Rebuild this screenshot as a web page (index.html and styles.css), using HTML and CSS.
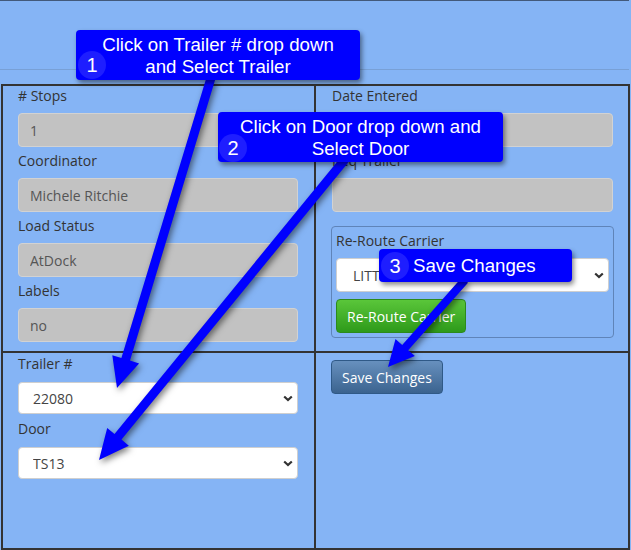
FILE: index.html
```html
<!DOCTYPE html>
<html>
<head>
<meta charset="utf-8">
<link rel="stylesheet" href="styles.css">
</head>
<body>
<div class="page">
  <div class="topbar"></div>
  <div class="grid">
    <div class="cell cell-l cell-top">
      <label class="lbl"># Stops</label>
      <input class="inp" readonly value="1">
      <label class="lbl">Coordinator</label>
      <input class="inp" readonly value="Michele Ritchie">
      <label class="lbl">Load Status</label>
      <input class="inp" readonly value="AtDock">
      <label class="lbl">Labels</label>
      <input class="inp" readonly value="no">
    </div>
    <div class="cell cell-r cell-top">
      <label class="lbl">Date Entered</label>
      <input class="inp" readonly value="">
      <label class="lbl">Req Trailer</label>
      <input class="inp" readonly value="">
      <div class="box">
        <label class="lbl">Re-Route Carrier</label>
        <select class="sel sel-box"><option>LITTLE TRANSPORT</option></select>
        <button class="btn-green">Re-Route Carrier</button>
      </div>
    </div>
    <div class="cell cell-l cell-bottom">
      <label class="lbl">Trailer #</label>
      <select class="sel"><option>22080</option></select>
      <label class="lbl">Door</label>
      <select class="sel"><option>TS13</option></select>
    </div>
    <div class="cell cell-r cell-bottom">
      <button class="btn-save">Save Changes</button>
    </div>
  </div>

  <svg class="arrows" width="631" height="550" viewBox="0 0 631 550">
    <polygon fill="#0000ff" points="215.3,79.3 130.0,360.6 139.1,363.4 117,388 112.3,355.2 121.4,358.0 206.7,76.7"/>
    <polygon fill="#0000ff" points="349.5,160.9 121.5,439.6 128.8,445.7 99,460 107.2,427.9 114.5,433.9 342.5,155.2"/>
    <polygon fill="#0000ff" points="468,282.7 408.2,350.2 414.9,356.1 388,367 395.5,338.9 402.2,344.9 462,277.3"/>
  </svg>

  <div class="callout c1"><span class="num">1</span>Click on Trailer # drop down<br>and Select Trailer</div>
  <div class="callout c2"><span class="num">2</span>Click on Door drop down and<br>Select Door</div>
  <div class="callout c3"><span class="num">3</span>Save Changes</div>
</div>
</body>
</html>
```

FILE: styles.css
```css
body {
  margin: 0;
  background: #85b4f5;
  font-family: "Open Sans", "Liberation Sans", sans-serif;
}

.page {
  position: relative;
  width: 631px;
  height: 550px;
  overflow: hidden;
}

.topbar {
  height: 68px;
  border-top: 1px solid #42597a;
  border-bottom: 1px solid #78a0d6;
  margin-right: 2px;
}

.grid {
  margin: 14px 1px 0 1px;
  height: 466px;
  box-sizing: border-box;
  border: 2px solid #333;
  display: grid;
  grid-template-columns: 313px 312px;
  grid-template-rows: 267px 195px;
}

.cell {
  box-sizing: border-box;
}

.cell-l {
  border-right: 2px solid #333;
  padding: 0 16px 0 15px;
}

.cell-r {
  padding: 0 15px 0 16px;
}

.cell-top {
  border-bottom: 2px solid #333;
}

.cell-bottom.cell-l {
  padding-top: 1px;
}

.lbl {
  display: block;
  font-size: 14px;
  line-height: 20px;
  color: #333;
}

.inp {
  display: block;
  width: 100%;
  height: 34px;
  margin: 7px 0 4px;
  box-sizing: border-box;
  border: 1px solid #d2d2d2;
  border-radius: 4px;
  background: #c2c2c2;
  padding: 0 11px;
  font-family: "Open Sans", sans-serif;
  font-size: 14px;
  color: #555;
  outline: none;
}

.sel {
  display: block;
  width: 100%;
  height: 32px;
  margin: 8px 0 5px;
  box-sizing: border-box;
  border: 1px solid #cfcfcf;
  border-radius: 4px;
  padding: 0 14px;
  font-family: "Open Sans", sans-serif;
  font-size: 14px;
  color: #444;
  -webkit-appearance: none;
  appearance: none;
  background-color: #fff;
  background-image: url("data:image/svg+xml;utf8,<svg xmlns='http://www.w3.org/2000/svg' width='10' height='7'><path d='M1.2 1.5l3.8 3.6 3.8-3.6' fill='none' stroke='%23333' stroke-width='2.2'/></svg>");
  background-repeat: no-repeat;
  background-position: right 4px center;
}

.box {
  margin: 14px -1px 0;
  border: 1px solid #5f84b9;
  border-radius: 4px;
  padding: 4px 4px 4px;
}

.sel-box {
  height: 34px;
  margin: 7px 0 0;
  padding: 0 16px;
}

.btn-green {
  display: block;
  margin-top: 7px;
  height: 34px;
  padding: 0 10px;
  border: 1px solid #2c8a1c;
  border-radius: 4px;
  background: linear-gradient(#5ac63a, #2e9a1a);
  color: #fff;
  font-family: "Open Sans", sans-serif;
  font-size: 14px;
}

.btn-save {
  display: block;
  margin: 7px 0 0 -1px;
  height: 34px;
  padding: 0 10px;
  border: 1px solid #2f5987;
  border-radius: 4px;
  background: linear-gradient(#6790be, #3b638f);
  color: #fff;
  font-family: "Open Sans", sans-serif;
  font-size: 14px;
}

.arrows {
  position: absolute;
  left: 0;
  top: 0;
  filter: drop-shadow(2px 3px 3px rgba(0, 0, 0, 0.5));
  pointer-events: none;
}

.callout {
  position: absolute;
  box-sizing: border-box;
  background: #0000ff;
  color: #fff;
  font-family: "Liberation Sans", Arial, sans-serif;
  font-size: 18.7px;
  line-height: 22px;
  text-align: center;
  border-radius: 4px;
  box-shadow: 2px 3px 5px rgba(0, 0, 0, 0.45);
}

.c1 {
  left: 76px;
  top: 30px;
  width: 284px;
  height: 50px;
  padding-top: 4px;
}

.c2 {
  left: 218px;
  top: 112px;
  width: 285px;
  height: 50px;
  padding-top: 4px;
}

.c3 {
  left: 379px;
  top: 249px;
  width: 193px;
  height: 33px;
  line-height: 33px;
  text-align: left;
  padding-left: 34px;
}

.num {
  position: absolute;
  width: 28px;
  height: 28px;
  border-radius: 50%;
  background: #1e1eff;
  font-size: 20px;
  line-height: 28px;
  text-align: center;
}

.c1 .num {
  left: 2px;
  top: 21px;
}

.c2 .num {
  left: 1px;
  top: 22px;
}

.c3 .num {
  left: 2px;
  top: 3px;
}
```
